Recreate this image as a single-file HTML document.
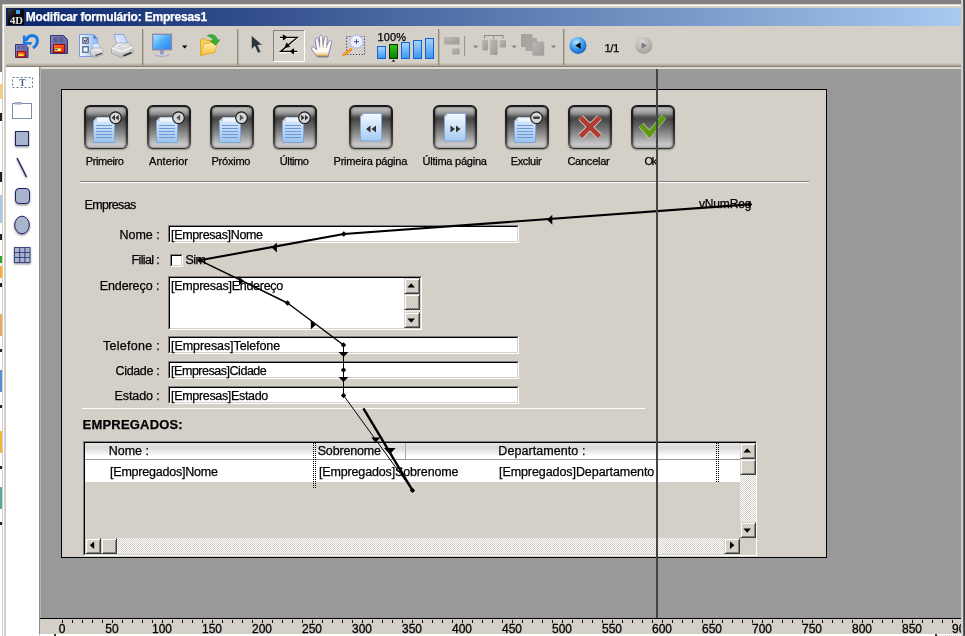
<!DOCTYPE html>
<html lang="pt"><head><meta charset="utf-8"><title>Modificar formulário: Empresas1</title>
<style>
html,body{margin:0;padding:0}
body{width:965px;height:636px;overflow:hidden;background:#808080;position:relative;font-family:"Liberation Sans",sans-serif;}
#root{position:absolute;left:0;top:0;width:965px;height:636px;overflow:hidden}
#root div,#root span,#root svg,#root i,#root b{position:absolute;box-sizing:border-box}
.t{white-space:nowrap;line-height:16px;height:16px;font-style:normal;-webkit-text-stroke:0.25px currentColor}
#frame{left:2px;top:4px;width:961px;height:640px;background:#d4d0c8;border-left:1px solid #d4d0c8;border-top:1px solid #d4d0c8}
#frame2{left:3px;top:5px;width:958px;height:640px;border-left:1px solid #fff;border-top:1px solid #fff}
#frameR{left:963px;top:0;width:2px;height:636px;background:linear-gradient(to right,#808080,#404040 60%)}
#frameR0{left:961px;top:0;width:2px;height:636px;background:#d4d0c8}
#title{left:6px;top:8px;width:955px;height:18px;background:linear-gradient(to right,#0a246a,#a6caf0)}
#tb{left:6px;top:26px;width:955px;height:37px;background:#d4d0c8}
#tbg{left:6px;top:63px;width:955px;height:3px;background:linear-gradient(to bottom,#cfcbbc,#a8a491)}
#tbl{left:6px;top:66px;width:955px;height:1px;background:#828076}
#pal{left:6px;top:67px;width:33px;height:569px;background:#fff}
#cvb{left:39px;top:67px;width:922px;height:551px;background:#dedad2;border-left:1px solid #8c8c8c}
#cvb2{left:40px;top:67px;width:1px;height:551px;background:#b4b4b4}
#cv{left:41px;top:69px;width:920px;height:549px;background:#999}
#ruler{left:40px;top:618px;width:921px;height:16px;background:#d4d0c8;border-top:1px solid #000;overflow:hidden}
#ruler i{top:1px;width:1px;height:3px;background:#000}
#ruler b{-webkit-text-stroke:0.3px #000;top:3px;width:40px;text-align:center;font-weight:normal;font-size:12px;line-height:14px;color:#000}
#below{left:40px;top:634px;width:921px;height:2px;background:#fff}
#form{left:61px;top:89px;width:766px;height:469px;background:#d4d0c8;border:1px solid #000}
.fb{top:15px;width:44px;height:44px;border-radius:6px;background:linear-gradient(to bottom,#1a1a1a 0%,#1e1e1e 35%,#3c3c3c 70%,#565656 92%,#2c2c2c 100%);box-shadow:0 1px 1.5px rgba(0,0,0,.35);overflow:hidden}
.fb:before{content:"";position:absolute;left:2px;top:2px;width:40px;height:41px;box-sizing:border-box;border-radius:4px;background:linear-gradient(to bottom,#9c9c9c 0%,#b8b8b8 5%,#aaa 10%,#8c8c8c 17%,#525252 24%,#484848 30%,#6a6a6a 49%,#9a9a9a 71%,#c8c8c8 91%,#bbb 97%,#9c9c9c 100%)}
.fb:after{content:"";position:absolute;left:2px;top:2px;width:40px;height:41px;box-sizing:border-box;border-radius:4px;box-shadow:inset 2px 0 2px -1px rgba(0,0,0,.3),inset -2px 0 2px -1px rgba(0,0,0,.3)}
.ic{left:0;top:0}
.hl{height:2px;border-top:1px solid #808080;border-bottom:1px solid #fff}
.fld{background:#fff;box-sizing:content-box!important;border:2px solid;border-color:#000 #fff #fff #000;outline:0}
.fld:before{content:"";position:absolute;left:-2px;top:-2px;right:-2px;bottom:-2px;border:1px solid;border-color:#808080 #fff #fff #808080}
.fld:after{content:"";position:absolute;left:-1px;top:-1px;right:-1px;bottom:-1px;border:1px solid;border-color:#000 #d4d0c8 #d4d0c8 #000}
.sb{width:16px;height:16px;background:#d4d0c8;border:1px solid;border-color:#d4d0c8 #404040 #404040 #d4d0c8;box-shadow:inset 1px 1px 0 #fff,inset -1px -1px 0 #808080}
.trk{background-color:#fff;background-image:linear-gradient(45deg,#d4d0c8 25%,transparent 25%,transparent 75%,#d4d0c8 75%),linear-gradient(45deg,#d4d0c8 25%,transparent 25%,transparent 75%,#d4d0c8 75%);background-size:2px 2px;background-position:0 0,1px 1px}
.sep{top:29px;width:1px;height:36px;background:#8c8a78}
.dot2{width:1px;background-image:linear-gradient(to bottom,#000 50%,transparent 50%);background-size:1px 2px;}
</style></head><body><div id="root">
<div style="left:0;top:72px;width:2px;height:564px;background:#fff"></div><div style="left:0;top:84px;width:2px;height:15px;background:#f6d070"></div><div style="left:0;top:113px;width:2px;height:8px;background:#222"></div><div style="left:0;top:172px;width:2px;height:10px;background:#222"></div><div style="left:0;top:195px;width:2px;height:28px;background:#a8c8e8"></div><div style="left:0;top:234px;width:2px;height:6px;background:#222"></div><div style="left:0;top:256px;width:2px;height:7px;background:#30a830"></div><div style="left:0;top:266px;width:2px;height:12px;background:#f0b030"></div><div style="left:0;top:283px;width:2px;height:4px;background:#222"></div><div style="left:0;top:314px;width:2px;height:22px;background:#e8a860"></div><div style="left:0;top:349px;width:2px;height:3px;background:#222"></div><div style="left:0;top:370px;width:2px;height:22px;background:#5890d8"></div><div style="left:0;top:405px;width:2px;height:3px;background:#222"></div><div style="left:0;top:431px;width:2px;height:22px;background:#f0b840"></div><div style="left:0;top:466px;width:2px;height:3px;background:#222"></div><div style="left:0;top:487px;width:2px;height:22px;background:#58a8a0"></div><div style="left:0;top:522px;width:2px;height:3px;background:#222"></div>
<div id="frame"></div><div id="frame2"></div>
<div id="frameR0"></div><div id="frameR"></div>
<div id="title"></div>
<svg style="left:8px;top:9px;will-change:transform" width="16" height="16" viewBox="0 0 16 16"><defs><linearGradient id="ig" x1="0" y1="0" x2="1" y2="1"><stop offset="0" stop-color="#3a3a3a"/><stop offset=".45" stop-color="#0c0c0c"/><stop offset="1" stop-color="#000"/></linearGradient></defs><rect width="16" height="16" fill="url(#ig)"/><rect x="8" y="1" width="4" height="4" fill="#3f9cf0"/><text x="2" y="14.5" font-family="Liberation Serif,serif" font-size="10.5" font-weight="bold" fill="#e4e4e4" textLength="13" lengthAdjust="spacingAndGlyphs">4D</text></svg>
<div id="tb"></div><div id="tbg"></div><div id="tbl"></div>
<svg id="tbsvg" style="left:0;top:26px" width="965" height="41" viewBox="0 26 965 41">
<defs>
<linearGradient id="flp" x1="0" y1="0" x2="1" y2="1"><stop offset="0" stop-color="#8585c2"/><stop offset="1" stop-color="#56569a"/></linearGradient>
<linearGradient id="flr" x1="0" y1="0" x2="1" y2="1"><stop offset="0" stop-color="#ff7a30"/><stop offset="1" stop-color="#e81c10"/></linearGradient>
<linearGradient id="scr" x1="0" y1="0" x2="1" y2="1"><stop offset="0" stop-color="#b4ecff"/><stop offset=".5" stop-color="#4aaaf8"/><stop offset="1" stop-color="#2a86ee"/></linearGradient>
<linearGradient id="barb" x1="0" y1="0" x2="0" y2="1"><stop offset="0" stop-color="#a8d4ff"/><stop offset="1" stop-color="#3a96f4"/></linearGradient>
<linearGradient id="barg" x1="0" y1="0" x2="0" y2="1"><stop offset="0" stop-color="#2cc814"/><stop offset="1" stop-color="#0c7c04"/></linearGradient>
<linearGradient id="pgb" x1="0" y1="0" x2="1" y2="0"><stop offset="0" stop-color="#f4f8ff"/><stop offset="1" stop-color="#8cb8f4"/></linearGradient>
<linearGradient id="fold" x1="0" y1="0" x2="0" y2="1"><stop offset="0" stop-color="#fff4b0"/><stop offset="1" stop-color="#f2c040"/></linearGradient>
<radialGradient id="ballb" cx=".4" cy=".3" r=".8"><stop offset="0" stop-color="#b8e4ff"/><stop offset=".5" stop-color="#3a9cf0"/><stop offset="1" stop-color="#0a50b8"/></radialGradient>
<radialGradient id="ballg" cx=".4" cy=".3" r=".8"><stop offset="0" stop-color="#d8d8d8"/><stop offset=".6" stop-color="#b4b2ac"/><stop offset="1" stop-color="#9c9a94"/></radialGradient>
<linearGradient id="dis" x1="0" y1="0" x2="1" y2="1"><stop offset="0" stop-color="#bcbab4"/><stop offset="1" stop-color="#9c9a96"/></linearGradient>
<linearGradient id="prn" x1="0" y1="0" x2="0" y2="1"><stop offset="0" stop-color="#f4f4f4"/><stop offset="1" stop-color="#b8b8b8"/></linearGradient>
<linearGradient id="hand" x1="0" y1="0" x2="0" y2="1"><stop offset="0" stop-color="#fffce4"/><stop offset=".76" stop-color="#fffaf0"/><stop offset=".9" stop-color="#e8c884"/><stop offset="1" stop-color="#9c6810"/></linearGradient>
</defs>
<!-- separators -->
<g fill="#8e8c7a"><rect x="142" y="29" width="1.4" height="36"/><rect x="237" y="29" width="1.4" height="36"/><rect x="438" y="29" width="1.4" height="36"/><rect x="563" y="29" width="1.4" height="36"/></g>
<!-- 1: revert -->
<g>
<path d="M15.5 44.5h9.5l3 3v10h-12.5z" fill="url(#flp)" stroke="#34347a"/>
<rect x="17.5" y="46" width="2.6" height="3" fill="#5c5c94"/><rect x="21.8" y="46" width="2.6" height="3" fill="#5c5c94"/>
<rect x="17.5" y="51.5" width="8" height="5.5" fill="url(#flr)" stroke="#a00808"/>
<rect x="18.5" y="54" width="5" height="2" fill="#ffe83c"/>
<path d="M33 48 C39 44 39 36 32 35.5 C29 35.5 27 38 25.5 41" fill="none" stroke="#1878e4" stroke-width="3"/>
<path d="M24.2 35.5 L24.2 43.6 L31.6 43.2" fill="none" stroke="#1878e4" stroke-width="2.6"/>
</g>
<!-- 2: save -->
<g>
<path d="M50.5 35.5h13l4 4v14h-17z" fill="url(#flp)" stroke="#34347a"/>
<rect x="53.2" y="37.2" width="4.6" height="5" fill="#5c5c94"/><rect x="59" y="37.2" width="4.4" height="5" fill="#5c5c94"/>
<rect x="53.5" y="44.5" width="11" height="8" fill="url(#flr)" stroke="#a00808"/>
<rect x="54.5" y="48" width="7" height="3.4" fill="#ffe83c" stroke="#c83008" stroke-width=".6"/>
<rect x="55.4" y="49" width="2" height="1.2" fill="#2040c0"/><rect x="58" y="49" width="2.4" height="1.2" fill="#fff"/>
</g>
<!-- 3: page with checkboxes + printer -->
<g>
<path d="M79.5 34.5h14l4 4v18h-18z" fill="url(#pgb)" stroke="#7c9ce0"/>
<path d="M93.5 34.5v4h4z" fill="#4a78d8"/>
<rect x="82.8" y="37.8" width="5.4" height="5.4" fill="#e8f0f8" stroke="#3c6478" stroke-width="1.2"/>
<path d="M84 40.2l1.4 1.6l2.2-3" stroke="#70205c" stroke-width="1.1" fill="none"/>
<rect x="82.8" y="46.8" width="5.4" height="5.4" fill="#f4f8fc" stroke="#3c6478" stroke-width="1.2"/>
<path d="M93 43.5h5.5l2.5 5h-9z" fill="#d8e8fc" stroke="#90a8e0" stroke-width=".7"/>
<path d="M90.5 50.5l3-2.5h8l1.5 2.5v4l-8 3l-4.5-2.5z" fill="url(#prn)" stroke="#9a9a9a" stroke-width=".7"/>
<path d="M95.5 55.5l6.5-2.2" stroke="#303030" stroke-width="1.2"/>
</g>
<!-- 4: printer -->
<g>
<path d="M114 34.5h9.5l4.5 9.5h-11z" fill="#cfe2fc" stroke="#8c9cdc" stroke-width=".9"/>
<path d="M116.5 38.5 l3 5.5h8" fill="none" stroke="#e8f2ff" stroke-width="2"/>
<path d="M111.5 47.5l6-4.5h11l4.5 4v6l-11.5 4.5l-10-4z" fill="url(#prn)" stroke="#a0a0a0" stroke-width=".8"/>
<path d="M111.5 47.8l10 4l11.3-4.6" fill="none" stroke="#fff" stroke-width="1"/>
<path d="M118.5 46.2l5.2 2l6-2.4l-4.6-1.6z" fill="#e8e8e8" stroke="#bcbcbc" stroke-width=".5"/>
<path d="M123.5 55.8l8-3.2" stroke="#282828" stroke-width="1.6"/>
<rect x="130.2" y="49.6" width="1.6" height="1" fill="#40c040"/>
</g>
<!-- 5: monitor -->
<g>
<ellipse cx="162" cy="54.8" rx="7" ry="2.2" fill="#a8a8c4"/><ellipse cx="162" cy="54.2" rx="6" ry="1.6" fill="#d4d4e4"/>
<rect x="160" y="49" width="4" height="5.4" fill="#9a9abc"/>
<rect x="152.8" y="34.3" width="18.6" height="15.4" fill="url(#scr)" stroke="#8888b4" stroke-width="1.4"/>
<path d="M182 45.5h5.4l-2.7 3z" fill="#000"/>
</g>
<!-- 6: folder + green arrow -->
<g>
<path d="M200.5 40l1-1.2h4l1.2 1.6h7.8v11.6l-14 3.4z" fill="#f4d060" stroke="#d8a020" stroke-width=".8"/>
<path d="M200.8 55.2l3-11.2l14.4-2.6l-3.4 11.2z" fill="url(#fold)" stroke="#e0a828" stroke-width=".8"/>
<path d="M207.5 35.6c5-2.2 9.4 0 9.6 4.6l2.6-.4l-4.2 5.4l-4.8-4l2.8-.5c-.4-2.4-2.8-3.4-6-5.1z" fill="#34b434" stroke="#1c8a1c" stroke-width=".7"/>
</g>
<!-- 7: pointer -->
<path d="M251.5 35.5v13.8l3.4-3.2l3 7l2.8-1.2l-3-6.8h4.6z" fill="#28323a" stroke="#c8c8c8" stroke-width=".5"/>
<!-- 8: pressed Z tool -->
<g>
<rect x="273.500" y="30.500" width="31" height="31" fill="#d8d4cc" stroke="none"/>
<path d="M273.500 61.500v-31h31" fill="none" stroke="#808080"/><path d="M304.500 30.500v31h-31" fill="none" stroke="#fff"/>
<path d="M280 38.400h17.200l-16.500 14h16.500" fill="none" stroke="#f4f2ec" stroke-width="1.600"/>
<path d="M280 37.400h17.200l-16.500 14h16.500" fill="none" stroke="#000" stroke-width="1.300"/>
<path d="M283.400 34.900v5M293.400 48.800v5" stroke="#000" stroke-width="1.100"/>
<path d="M287 37.400l-3.400-2.600v5.200zM290 51.400l3.400-2.600v5.200zM284.800 47.800l5.200-1.200l-3.400-3.800z" fill="#000" stroke="#000" stroke-width=".4"/>
</g>
<!-- 9: hand -->
<g>
<path d="M317.5 57 C315.5 54 312.6 51.6 311.7 49.2 C311 47 313.2 46.2 314.6 47.6 L316.6 50 L315.3 40.2 C315 37.8 317.7 37.2 318.3 39.2 L319.6 45 L319.5 37.200 C319.500 34.800 322.500 34.800 322.700 37.200 L323.100 44.600 L324.300 37.800 C324.700 35.600 327.500 36 327.300 38.200 L326.800 45.400 L328.700 41.600 C329.700 39.800 332 40.600 331.500 42.800 C330.700 46.200 330.100 49.200 329.100 52.200 C328.500 54.200 328.100 55.600 328.100 57 Z" fill="url(#hand)" stroke="#8282b4" stroke-width="1"/>
<path d="M319.600 45l.2 2.500M323.100 44.600v3M326.800 45.400l-.3 2.400" stroke="#8c8cbc" stroke-width=".9" fill="none"/>
</g>
<!-- 10: zoom -->
<g>
<rect x="346.500" y="36.5" width="18" height="18" fill="none" stroke="#202060" stroke-width="1" stroke-dasharray="1 1.9"/>
<path d="M351 49.500l-7.400 5.400" stroke="#f09828" stroke-width="2.800" stroke-linecap="round"/>
<circle cx="356.5" cy="41.7" r="6.6" fill="#eaf2ff" stroke="#b8c4ec" stroke-width="1.4"/>
<path d="M354 41.700h5M356.500 39.200v5" stroke="#484890" stroke-width="1"/>
</g>
<!-- 11: bars -->
<g stroke-width="1">
<rect x="377.5" y="46.5" width="8" height="12" fill="url(#barb)" stroke="#1464d4"/>
<rect x="389.5" y="44.5" width="8" height="14" fill="url(#barg)" stroke="#0c2c0c"/>
<rect x="401.500" y="42.500" width="8" height="16" fill="url(#barb)" stroke="#1464d4"/>
<rect x="413.500" y="40.500" width="8" height="18" fill="url(#barb)" stroke="#1464d4"/>
<rect x="425.500" y="38.500" width="8" height="20" fill="url(#barb)" stroke="#1464d4"/>
<path d="M391.700 61.500l1.800-2l1.800 2z" fill="#000" stroke="none"/>
</g>
<!-- 12-14 disabled -->
<g>
<rect x="444" y="37" width="15.600" height="7.400" rx="1" fill="url(#dis)"/><rect x="452" y="48.200" width="7.600" height="6.200" rx="1" fill="url(#dis)"/>
<rect x="464" y="36" width="1.200" height="20" fill="#9c9a92"/>
<path d="M473 45.500h5.400l-2.700 3z" fill="#8a8884"/>
<path d="M484.500 38.500v-3h18.500v3M493.700 35.500v3" fill="none" stroke="#8a8a86" stroke-width="1.100"/>
<rect x="482" y="40" width="6" height="10.500" rx="1" fill="url(#dis)"/><rect x="490" y="39.500" width="7.500" height="15.500" rx="1" fill="url(#dis)"/><rect x="499.500" y="40" width="6.500" height="7.500" rx="1" fill="url(#dis)"/>
<path d="M511.500 45.500h5.400l-2.700 3z" fill="#8a8884"/>
<rect x="521" y="34" width="11.500" height="13" rx="1" fill="#a4a29e"/><rect x="525.500" y="38" width="11.500" height="13" rx="1" fill="#a8a6a2"/><rect x="532.500" y="42" width="11.500" height="13.400" rx="1" fill="url(#dis)" stroke="#a8a6a0" stroke-width=".6"/>
<path d="M550.800 45.500h5.400l-2.700 3z" fill="#8a8884"/>
</g>
<!-- nav balls -->
<circle cx="578" cy="45.600" r="8.500" fill="url(#ballb)"/><path d="M580.600 42.400v6.400l-5.400-3.200z" fill="#000"/>
<circle cx="643.800" cy="45.600" r="8.500" fill="url(#ballg)"/><path d="M641.600 42.400v6.400l5.400-3.200z" fill="#7c7a76"/>
</svg>

<div id="pal"></div>
<svg style="left:6px;top:67px;will-change:transform" width="34" height="210" viewBox="6 67 34 210">
<defs><filter id="psh" x="-20%" y="-20%" width="140%" height="150%"><feDropShadow dx="0" dy="1.2" stdDeviation=".8" flood-color="#000" flood-opacity=".45"/></filter></defs>
<rect x="12.500" y="77.500" width="20" height="10" fill="none" stroke="#5c7890" stroke-width="1" stroke-dasharray="2 2"/>
<text x="22.500" y="86" font-family="Liberation Serif,serif" font-weight="bold" font-size="9.500" fill="#4c6490" text-anchor="middle">T</text>
<rect x="12.500" y="103.500" width="19" height="15" fill="#fff" stroke="#7c8ca8" stroke-width="1"/>
<rect x="15" y="102" width="7" height="2.600" fill="#a8a8cc"/>
<g filter="url(#psh)">
<rect x="15.500" y="131.500" width="13" height="14" fill="#a8b4cc" stroke="#202064"/>
<path d="M17 158l9.500 19" stroke="#202064" stroke-width="1.400"/>
<rect x="15.500" y="188.500" width="14" height="15" rx="3.500" fill="#a8b4cc" stroke="#202064"/>
<ellipse cx="22" cy="225" rx="7.300" ry="8.800" fill="#a8b4cc" stroke="#202064"/>
<rect x="14.500" y="247.500" width="15.500" height="15" fill="#a8b4cc" stroke="#3c4484"/>
<path d="M19.700 247.500v15M24.900 247.500v15M14.500 252.500h15.500M14.500 257.500h15.500" stroke="#3c4484" stroke-width="1.100" fill="none"/>
</g>
</svg>

<div id="cvb"></div><div id="cvb2"></div><div id="cv"></div>
<div id="form">
<div class="fb" style="left:22px"><svg class="ic" viewBox="0 0 44 44" width="44" height="44">
<defs><linearGradient id="dg" x1="0" y1="0" x2="0" y2="1"><stop offset="0" stop-color="#dcecfb"/><stop offset="1" stop-color="#9cc4ee"/></linearGradient></defs>
<path d="M13 12.5 L30.5 12.5 L30.5 37.5 L9.5 37.5 L9.5 16 Z" fill="url(#dg)" stroke="#7fa4d8" stroke-width="1"/>
<path d="M9.5 16 L13 16 L13 12.5 Z" fill="#c8c8c8"/>
<path d="M13 12.5 h13 v4 h-13 z" fill="#eef6fe"/>
<g stroke="#6f97d6" stroke-width="1"><path d="M12 20.5h16M12 23.5h16M12 26.5h16M12 29.5h16M12 32.5h16"/></g>
<circle cx="31.5" cy="12.7" r="5.8" fill="#d6d6d6" stroke="#1c1c1c" stroke-width="1.2"/><path d="M31 9.8v5.8l-3.4-2.9zM34.8 9.8v5.8l-3.4-2.9z" fill="#333"/></svg></div><div class="fb" style="left:85px"><svg class="ic" viewBox="0 0 44 44" width="44" height="44">
<defs><linearGradient id="dg" x1="0" y1="0" x2="0" y2="1"><stop offset="0" stop-color="#dcecfb"/><stop offset="1" stop-color="#9cc4ee"/></linearGradient></defs>
<path d="M13 12.5 L30.5 12.5 L30.5 37.5 L9.5 37.5 L9.5 16 Z" fill="url(#dg)" stroke="#7fa4d8" stroke-width="1"/>
<path d="M9.5 16 L13 16 L13 12.5 Z" fill="#c8c8c8"/>
<path d="M13 12.5 h13 v4 h-13 z" fill="#eef6fe"/>
<g stroke="#6f97d6" stroke-width="1"><path d="M12 20.5h16M12 23.5h16M12 26.5h16M12 29.5h16M12 32.5h16"/></g>
<circle cx="31.5" cy="12.7" r="5.8" fill="#d6d6d6" stroke="#1c1c1c" stroke-width="1.2"/><path d="M33.2 9.6v6.2l-4-3.1z" fill="#555"/></svg></div><div class="fb" style="left:148px"><svg class="ic" viewBox="0 0 44 44" width="44" height="44">
<defs><linearGradient id="dg" x1="0" y1="0" x2="0" y2="1"><stop offset="0" stop-color="#dcecfb"/><stop offset="1" stop-color="#9cc4ee"/></linearGradient></defs>
<path d="M13 12.5 L30.5 12.5 L30.5 37.5 L9.5 37.5 L9.5 16 Z" fill="url(#dg)" stroke="#7fa4d8" stroke-width="1"/>
<path d="M9.5 16 L13 16 L13 12.5 Z" fill="#c8c8c8"/>
<path d="M13 12.5 h13 v4 h-13 z" fill="#eef6fe"/>
<g stroke="#6f97d6" stroke-width="1"><path d="M12 20.5h16M12 23.5h16M12 26.5h16M12 29.5h16M12 32.5h16"/></g>
<circle cx="31.5" cy="12.7" r="5.8" fill="#d6d6d6" stroke="#1c1c1c" stroke-width="1.2"/><path d="M29.8 9.6v6.2l4-3.1z" fill="#555"/></svg></div><div class="fb" style="left:211px"><svg class="ic" viewBox="0 0 44 44" width="44" height="44">
<defs><linearGradient id="dg" x1="0" y1="0" x2="0" y2="1"><stop offset="0" stop-color="#dcecfb"/><stop offset="1" stop-color="#9cc4ee"/></linearGradient></defs>
<path d="M13 12.5 L30.5 12.5 L30.5 37.5 L9.5 37.5 L9.5 16 Z" fill="url(#dg)" stroke="#7fa4d8" stroke-width="1"/>
<path d="M9.5 16 L13 16 L13 12.5 Z" fill="#c8c8c8"/>
<path d="M13 12.5 h13 v4 h-13 z" fill="#eef6fe"/>
<g stroke="#6f97d6" stroke-width="1"><path d="M12 20.5h16M12 23.5h16M12 26.5h16M12 29.5h16M12 32.5h16"/></g>
<circle cx="31.5" cy="12.7" r="5.8" fill="#d6d6d6" stroke="#1c1c1c" stroke-width="1.2"/><path d="M28.2 9.8v5.8l3.4-2.9zM32 9.8v5.8l3.4-2.9z" fill="#333"/></svg></div><div class="fb" style="left:287px"><svg class="ic" viewBox="0 0 44 44" width="44" height="44">
<defs><linearGradient id="pg2" x1="0" y1="0" x2="0" y2="1"><stop offset="0" stop-color="#f4f9ff"/><stop offset="1" stop-color="#a4cbf3"/></linearGradient></defs>
<path d="M14.5 8.5 L32.5 8.5 L32.5 36 L11.5 36 L11.5 11.5 Z" fill="url(#pg2)" stroke="#86a9dc" stroke-width="1"/>
<path d="M11.5 11.5 L14.5 11.5 L14.5 8.5 Z" fill="#d8d8d8"/>
<path d="M21.5 20.5v7l-4.5-3.5zM27 20.5v7l-4.5-3.5z" fill="#333"/></svg></div><div class="fb" style="left:371px"><svg class="ic" viewBox="0 0 44 44" width="44" height="44">
<defs><linearGradient id="pg2" x1="0" y1="0" x2="0" y2="1"><stop offset="0" stop-color="#f4f9ff"/><stop offset="1" stop-color="#a4cbf3"/></linearGradient></defs>
<path d="M14.5 8.5 L32.5 8.5 L32.5 36 L11.5 36 L11.5 11.5 Z" fill="url(#pg2)" stroke="#86a9dc" stroke-width="1"/>
<path d="M11.5 11.5 L14.5 11.5 L14.5 8.5 Z" fill="#d8d8d8"/>
<path d="M17.5 20.5v7l4.5-3.5zM23 20.5v7l4.5-3.5z" fill="#333"/></svg></div><div class="fb" style="left:443px"><svg class="ic" viewBox="0 0 44 44" width="44" height="44">
<defs><linearGradient id="dg" x1="0" y1="0" x2="0" y2="1"><stop offset="0" stop-color="#dcecfb"/><stop offset="1" stop-color="#9cc4ee"/></linearGradient></defs>
<path d="M13 12.5 L30.5 12.5 L30.5 37.5 L9.5 37.5 L9.5 16 Z" fill="url(#dg)" stroke="#7fa4d8" stroke-width="1"/>
<path d="M9.5 16 L13 16 L13 12.5 Z" fill="#c8c8c8"/>
<path d="M13 12.5 h13 v4 h-13 z" fill="#eef6fe"/>
<g stroke="#6f97d6" stroke-width="1"><path d="M12 20.5h16M12 23.5h16M12 26.5h16M12 29.5h16M12 32.5h16"/></g>
<circle cx="31.5" cy="12.7" r="5.8" fill="#d6d6d6" stroke="#1c1c1c" stroke-width="1.2"/><rect x="28.3" y="11.5" width="6.4" height="2.4" fill="#333"/></svg></div><div class="fb" style="left:506px"><svg class="ic" viewBox="0 0 44 44" width="44" height="44">
<path d="M12.5 12.5 L31.5 31.5 M31.5 12.5 L12.5 31.5" stroke="#f0e0dc" stroke-width="6.4" stroke-linecap="butt" opacity=".9"/>
<path d="M12.5 12.5 L31.5 31.5 M31.5 12.5 L12.5 31.5" stroke="#b03c30" stroke-width="4.6" stroke-linecap="butt"/>
</svg></div><div class="fb" style="left:569px"><svg class="ic" viewBox="0 0 44 44" width="44" height="44">
<path d="M10 20 L18.5 29.5 L33 11.5" stroke="#d8e8c0" stroke-width="6.5" fill="none" opacity=".6"/>
<path d="M10 20 L18.5 29.5 L33 11.5" stroke="#5b9a12" stroke-width="4.8" fill="none"/>
</svg></div>
<div class="hl" style="left:18px;top:91px;width:729px"></div>
<div class="fld" style="left:106px;top:135px;width:347px;height:14px"></div>
<div style="left:108px;top:164px;width:13px;height:13px;background:#fff;border:2px solid;border-color:#000 #d4d0c8 #d4d0c8 #000"></div>
<div style="left:108px;top:164px;width:13px;height:13px;border:1px solid;border-color:#808080 #fff #fff #808080"></div>
<div class="fld" style="left:106px;top:186px;width:250px;height:50px"></div>
<div class="sb" style="left:342px;top:188px"><svg width="12" height="12" viewBox="2 2 12 12" style="position:absolute;left:0;top:0"><path d="M4.4 10.5 L8 6.6 L8.4 6.6 L12 10.5 Z" fill="#000"/></svg></div><div class="sb" style="left:342px;top:204px"></div><div class="trk" style="left:342px;top:220px;width:16px;height:2px"></div><div class="sb" style="left:342px;top:222px"><svg width="12" height="12" viewBox="2 2 12 12" style="position:absolute;left:0;top:0"><path d="M4.4 7.5 L12 7.5 L8.4 11.4 L8 11.4 Z" fill="#000"/></svg></div>
<div class="fld" style="left:106px;top:246px;width:347px;height:14px"></div>
<div class="fld" style="left:106px;top:271px;width:347px;height:14px"></div>
<div class="fld" style="left:106px;top:296px;width:347px;height:14px"></div>
<div style="left:20px;top:318px;width:563px;height:1px;background:#fff"></div>
<!-- listbox -->
<div id="lb" style="left:21px;top:351px;width:674px;height:115px;border:1px solid;border-color:#808080 #fff #fff #808080"></div>
<div style="left:22px;top:352px;width:672px;height:113px;border:1px solid;border-color:#000 #d4d0c8 #d4d0c8 #000;border-right:0"></div>
<div style="left:23px;top:353px;width:655px;height:16px;background:linear-gradient(to bottom,#e4e4e4 0%,#d9d9d9 30%,#f2f2f2 65%,#fff 85%)"></div>
<div style="left:23px;top:369px;width:655px;height:1px;background:#9a9a9a"></div>
<div style="left:23px;top:370px;width:655px;height:22px;background:#fff"></div>
<div style="left:343px;top:353px;width:1px;height:16px;background:#a8a8a8"></div>
<div class="dot2" style="left:251px;top:353px;height:45px"></div><div class="dot2" style="left:253px;top:353px;height:45px"></div>
<div class="dot2" style="left:654px;top:353px;height:39px"></div><div class="dot2" style="left:656px;top:353px;height:39px"></div>
<div class="sb" style="left:678px;top:353px"><svg width="12" height="12" viewBox="2 2 12 12" style="position:absolute;left:0;top:0"><path d="M4.4 10.5 L8 6.6 L8.4 6.6 L12 10.5 Z" fill="#000"/></svg></div><div class="sb" style="left:678px;top:369px"></div><div class="trk" style="left:678px;top:385px;width:16px;height:47px"></div><div class="sb" style="left:678px;top:432px"><svg width="12" height="12" viewBox="2 2 12 12" style="position:absolute;left:0;top:0"><path d="M4.4 7.5 L12 7.5 L8.4 11.4 L8 11.4 Z" fill="#000"/></svg></div>
<div class="sb" style="left:23px;top:448px"><svg width="12" height="12" viewBox="2 2 12 12" style="position:absolute;left:0;top:0"><path d="M10.2 4.4 L10.2 12 L6 8.4 L6 8 Z" fill="#000"/></svg></div><div class="sb" style="left:39px;top:448px"></div><div class="trk" style="left:55px;top:448px;width:607px;height:16px"></div><div class="sb" style="left:662px;top:448px"><svg width="12" height="12" viewBox="2 2 12 12" style="position:absolute;left:0;top:0"><path d="M7 4.4 L7 12 L11.2 8.4 L11.2 8 Z" fill="#000"/></svg></div>
<div style="left:678px;top:448px;width:16px;height:16px;background:#d4d0c8"></div>
</div>
<div id="txt" style="left:0;top:0;width:965px;height:636px;will-change:transform"><span class="t" id="t_title" style="left:25.8px;top:8.84px;font-size:12px;font-weight:bold;color:#fff;letter-spacing:-0.203px;">Modificar formulário: Empresas1</span>
<span class="t" id="t_pct" style="left:377.6px;top:29.19px;font-size:11px;font-weight:normal;color:#000;letter-spacing:0.088px;">100%</span>
<span class="t" id="t_pg" style="left:604.5px;top:40.02px;font-size:11.5px;font-weight:normal;color:#000;letter-spacing:-0.550px;">1/1</span>
<span class="t" id="t_b1" style="left:85.8px;top:153.19px;font-size:11px;font-weight:normal;color:#000;letter-spacing:-0.408px;">Primeiro</span>
<span class="t" id="t_b2" style="left:149.0px;top:153.19px;font-size:11px;font-weight:normal;color:#000;letter-spacing:0.069px;">Anterior</span>
<span class="t" id="t_b3" style="left:211.5px;top:153.19px;font-size:11px;font-weight:normal;color:#000;letter-spacing:-0.226px;">Próximo</span>
<span class="t" id="t_b4" style="left:279.8px;top:153.19px;font-size:11px;font-weight:normal;color:#000;letter-spacing:-0.397px;">Último</span>
<span class="t" id="t_b5" style="left:333.6px;top:153.19px;font-size:11px;font-weight:normal;color:#000;letter-spacing:-0.238px;">Primeira página</span>
<span class="t" id="t_b6" style="left:422.5px;top:153.19px;font-size:11px;font-weight:normal;color:#000;letter-spacing:-0.239px;">Última página</span>
<span class="t" id="t_b7" style="left:510.7px;top:153.19px;font-size:11px;font-weight:normal;color:#000;letter-spacing:-0.336px;">Excluir</span>
<span class="t" id="t_b8" style="left:567.4px;top:153.19px;font-size:11px;font-weight:normal;color:#000;letter-spacing:-0.233px;">Cancelar</span>
<span class="t" id="t_b9" style="left:644.6px;top:153.19px;font-size:11px;font-weight:normal;color:#000;letter-spacing:-1.368px;">Ok</span>
<span class="t" id="t_emp" style="left:84.5px;top:196.67px;font-size:12.5px;font-weight:normal;color:#000;letter-spacing:-0.654px;">Empresas</span>
<span class="t" id="t_vnum" style="left:698.9px;top:195.84px;font-size:12px;font-weight:normal;color:#000;letter-spacing:-0.125px;">vNumReg</span>
<span class="t" id="t_l1" style="left:119.5px;top:226.67px;font-size:12.5px;font-weight:normal;color:#000;letter-spacing:-0.018px;">Nome :</span>
<span class="t" id="t_f1" style="left:171.1px;top:226.67px;font-size:12.5px;font-weight:normal;color:#000;letter-spacing:-0.359px;">[Empresas]Nome</span>
<span class="t" id="t_l2" style="left:131.6px;top:251.67px;font-size:12.5px;font-weight:normal;color:#000;letter-spacing:-0.649px;">Filial :</span>
<span class="t" id="t_sim" style="left:185.6px;top:251.67px;font-size:12.5px;font-weight:normal;color:#000;letter-spacing:-0.571px;">Sim</span>
<span class="t" id="t_l3" style="left:99.7px;top:277.67px;font-size:12.5px;font-weight:normal;color:#000;letter-spacing:-0.085px;">Endereço :</span>
<span class="t" id="t_f3" style="left:171.1px;top:277.67px;font-size:12.5px;font-weight:normal;color:#000;letter-spacing:-0.266px;">[Empresas]Endereço</span>
<span class="t" id="t_l4" style="left:103.0px;top:337.67px;font-size:12.5px;font-weight:normal;color:#000;letter-spacing:0.276px;">Telefone :</span>
<span class="t" id="t_f4" style="left:171.1px;top:337.67px;font-size:12.5px;font-weight:normal;color:#000;letter-spacing:-0.081px;">[Empresas]Telefone</span>
<span class="t" id="t_l5" style="left:115.5px;top:362.67px;font-size:12.5px;font-weight:normal;color:#000;letter-spacing:-0.338px;">Cidade :</span>
<span class="t" id="t_f5" style="left:171.1px;top:362.67px;font-size:12.5px;font-weight:normal;color:#000;letter-spacing:-0.476px;">[Empresas]Cidade</span>
<span class="t" id="t_l6" style="left:114.6px;top:387.67px;font-size:12.5px;font-weight:normal;color:#000;letter-spacing:-0.109px;">Estado :</span>
<span class="t" id="t_f6" style="left:171.1px;top:387.67px;font-size:12.5px;font-weight:normal;color:#000;letter-spacing:-0.329px;">[Empresas]Estado</span>
<span class="t" id="t_empg" style="left:82.6px;top:416.50px;font-size:13px;font-weight:bold;color:#000;letter-spacing:0.186px;">EMPREGADOS:</span>
<span class="t" id="t_h1" style="left:108.7px;top:442.67px;font-size:12.5px;font-weight:normal;color:#000;letter-spacing:-0.000px;">Nome :</span>
<span class="t" id="t_h2" style="left:317.7px;top:442.67px;font-size:12.5px;font-weight:normal;color:#000;letter-spacing:-0.166px;">Sobrenome</span>
<span class="t" id="t_h3" style="left:498.3px;top:442.67px;font-size:12.5px;font-weight:normal;color:#000;letter-spacing:0.072px;">Departamento :</span>
<span class="t" id="t_r1" style="left:110.0px;top:463.67px;font-size:12.5px;font-weight:normal;color:#000;letter-spacing:-0.212px;">[Empregados]Nome</span>
<span class="t" id="t_r2" style="left:318.9px;top:463.67px;font-size:12.5px;font-weight:normal;color:#000;letter-spacing:-0.143px;">[Empregados]Sobrenome</span>
<span class="t" id="t_r3" style="left:499.0px;top:463.67px;font-size:12.5px;font-weight:normal;color:#000;letter-spacing:-0.075px;">[Empregados]Departamento</span></div>
<svg id="lines" style="left:0;top:0" width="965" height="636" viewBox="0 0 965 636">
<g stroke="#000" fill="none">
<path d="M749.6 204.4L343.8 234" stroke-width="2.1"/>
<path d="M343.8 234L199.8 260.3" stroke-width="2.1"/>
<path d="M199.8 260.3L287.5 303" stroke-width="1.5"/>
<path d="M287.5 303L343.5 345" stroke-width="1.4"/>
<path d="M343.5 345L343.5 370" stroke-width="1.0"/>
<path d="M343.5 370L343.5 395.5" stroke-width="1.0"/>
<path d="M343.6 395.5L412.5 490.4" stroke-width="1.0"/>
<path d="M363.4 408.3L412.5 490.4" stroke-width="2.4"/>
</g><g fill="#000">
<path d="M547.1 219.8L552.3 214.8L552.3 224.8Z"/>
<path d="M271.7 247.6L276.9 242.6L276.9 252.6Z"/>
<path d="M244.0 281.0L239.0 276.4L239.0 285.6Z"/>
<path d="M315.8 324.8L310.8 320.2L310.8 329.4Z"/>
<path d="M343.5 357.0L338.5 352.0L348.5 352.0Z"/>
<path d="M343.5 382.0L338.5 377.0L348.5 377.0Z"/>
<path d="M375.7 442.5L371.1 437.5L380.3 437.5Z"/>
<path d="M389.8 454.5L384.0 448.1L395.6 448.1Z"/>
<path d="M746.9 204.4L749.6 201.7L752.3 204.4L749.6 207.1Z"/>
<path d="M341.1 234.0L343.8 231.3L346.5 234.0L343.8 236.7Z"/>
<path d="M197.1 260.3L199.8 257.6L202.5 260.3L199.8 263.0Z"/>
<path d="M284.8 303.0L287.5 300.3L290.2 303.0L287.5 305.7Z"/>
<path d="M340.8 345.0L343.5 342.3L346.2 345.0L343.5 347.7Z"/>
<path d="M340.8 370.0L343.5 367.3L346.2 370.0L343.5 372.7Z"/>
<path d="M340.8 395.5L343.5 392.8L346.2 395.5L343.5 398.2Z"/>
<path d="M409.8 490.4L412.5 487.7L415.2 490.4L412.5 493.1Z"/>
</g></svg>
<div style="left:656px;top:69px;width:2px;height:549px;background:#454545"></div>
<div id="ruler"><i style="left:22px"></i><i style="left:32px"></i><i style="left:42px"></i><i style="left:52px"></i><i style="left:62px"></i><i style="left:72px"></i><i style="left:82px"></i><i style="left:92px"></i><i style="left:102px"></i><i style="left:112px"></i><i style="left:122px"></i><i style="left:132px"></i><i style="left:142px"></i><i style="left:152px"></i><i style="left:162px"></i><i style="left:172px"></i><i style="left:182px"></i><i style="left:192px"></i><i style="left:202px"></i><i style="left:212px"></i><i style="left:222px"></i><i style="left:232px"></i><i style="left:242px"></i><i style="left:252px"></i><i style="left:262px"></i><i style="left:272px"></i><i style="left:282px"></i><i style="left:292px"></i><i style="left:302px"></i><i style="left:312px"></i><i style="left:322px"></i><i style="left:332px"></i><i style="left:342px"></i><i style="left:352px"></i><i style="left:362px"></i><i style="left:372px"></i><i style="left:382px"></i><i style="left:392px"></i><i style="left:402px"></i><i style="left:412px"></i><i style="left:422px"></i><i style="left:432px"></i><i style="left:442px"></i><i style="left:452px"></i><i style="left:462px"></i><i style="left:472px"></i><i style="left:482px"></i><i style="left:492px"></i><i style="left:502px"></i><i style="left:512px"></i><i style="left:522px"></i><i style="left:532px"></i><i style="left:542px"></i><i style="left:552px"></i><i style="left:562px"></i><i style="left:572px"></i><i style="left:582px"></i><i style="left:592px"></i><i style="left:602px"></i><i style="left:612px"></i><i style="left:622px"></i><i style="left:632px"></i><i style="left:642px"></i><i style="left:652px"></i><i style="left:662px"></i><i style="left:672px"></i><i style="left:682px"></i><i style="left:692px"></i><i style="left:702px"></i><i style="left:712px"></i><i style="left:722px"></i><i style="left:732px"></i><i style="left:742px"></i><i style="left:752px"></i><i style="left:762px"></i><i style="left:772px"></i><i style="left:782px"></i><i style="left:792px"></i><i style="left:802px"></i><i style="left:812px"></i><i style="left:822px"></i><i style="left:832px"></i><i style="left:842px"></i><i style="left:852px"></i><i style="left:862px"></i><i style="left:872px"></i><i style="left:882px"></i><i style="left:892px"></i><i style="left:902px"></i><i style="left:912px"></i><div style="left:0;top:0;width:921px;height:16px;will-change:transform"><b style="left:2px">0</b><b style="left:52px">50</b><b style="left:102px">100</b><b style="left:152px">150</b><b style="left:202px">200</b><b style="left:252px">250</b><b style="left:302px">300</b><b style="left:352px">350</b><b style="left:402px">400</b><b style="left:452px">450</b><b style="left:502px">500</b><b style="left:552px">550</b><b style="left:602px">600</b><b style="left:652px">650</b><b style="left:702px">700</b><b style="left:752px">750</b><b style="left:802px">800</b><b style="left:852px">850</b><b style="left:902px">900</b></div></div>
<div id="below"></div><div style="left:39px;top:618px;width:1px;height:16px;background:#8c8c8c"></div><div style="left:54px;top:634px;width:2px;height:2px;background:#333"></div><div class="trk" style="left:936px;top:635px;width:25px;height:1px"></div><div style="left:935px;top:634px;width:2px;height:2px;background:#333"></div>
</div></body></html>
